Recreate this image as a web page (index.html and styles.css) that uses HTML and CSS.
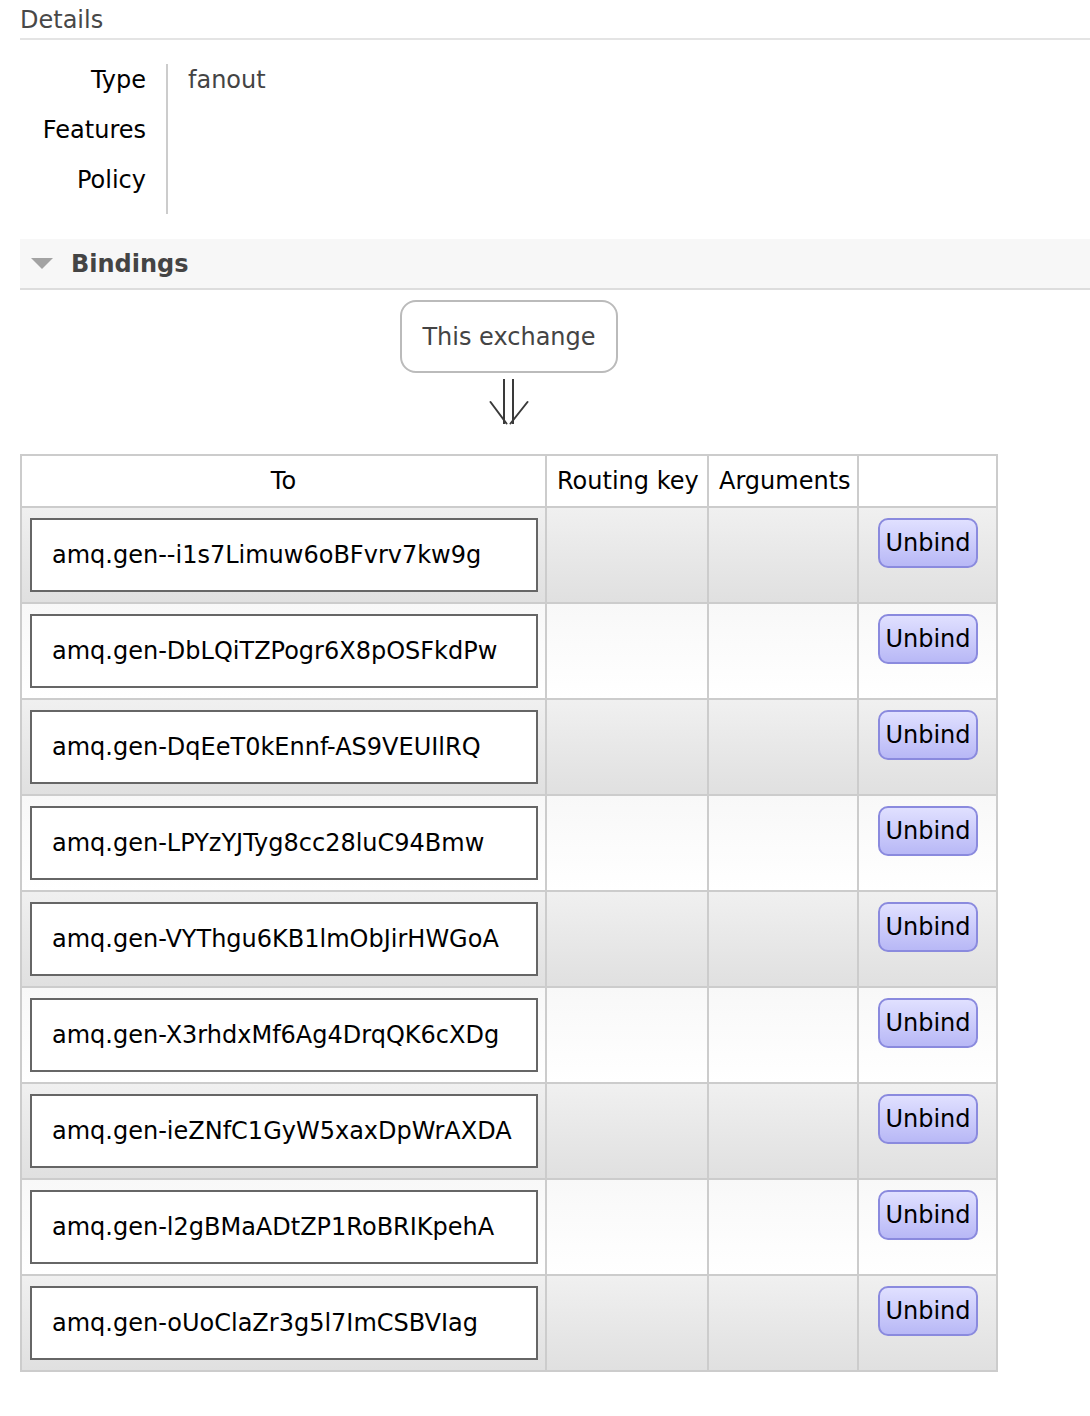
FILE: index.html
```html
<!DOCTYPE html>
<html lang="en">
<head>
<meta charset="utf-8">
<title>Exchange details</title>
<link rel="stylesheet" href="styles.css">
</head>
<body>
<div class="page">
  <section class="section">
    <h2 class="section-title">Details</h2>
    <table class="facts">
      <tr><th>Type</th><td>fanout</td></tr>
      <tr><th>Features</th><td></td></tr>
      <tr><th>Policy</th><td></td></tr>
    </table>
  </section>

  <section class="section">
    <h2 class="section-toggle"><span class="tri"></span>Bindings</h2>
    <div class="bindings-wrapper">
      <div class="exchange-box">This exchange</div>
      <svg class="arrow" width="40" height="50" viewBox="0 0 40 50" aria-hidden="true">
        <path d="M15 1 V46 M24 1 V46" stroke="#3a3a3a" stroke-width="2" fill="none"/>
        <path d="M1.5 24 L17.5 45.5 M38.5 24 L21.5 45.5" stroke="#3a3a3a" stroke-width="2" fill="none" stroke-linecap="round"/>
      </svg>
      <div class="bindings">
        <div class="brow head">
          <div class="cell">To</div>
          <div class="cell left">Routing key</div>
          <div class="cell left">Arguments</div>
          <div class="cell"></div>
        </div>
        <div class="brow alt1"><div class="cell"><span class="qname">amq.gen--i1s7Limuw6oBFvrv7kw9g</span></div><div class="cell"></div><div class="cell"></div><div class="cell act"><button class="btn">Unbind</button></div></div>
        <div class="brow alt2"><div class="cell"><span class="qname">amq.gen-DbLQiTZPogr6X8pOSFkdPw</span></div><div class="cell"></div><div class="cell"></div><div class="cell act"><button class="btn">Unbind</button></div></div>
        <div class="brow alt1"><div class="cell"><span class="qname">amq.gen-DqEeT0kEnnf-AS9VEUIlRQ</span></div><div class="cell"></div><div class="cell"></div><div class="cell act"><button class="btn">Unbind</button></div></div>
        <div class="brow alt2"><div class="cell"><span class="qname">amq.gen-LPYzYJTyg8cc28luC94Bmw</span></div><div class="cell"></div><div class="cell"></div><div class="cell act"><button class="btn">Unbind</button></div></div>
        <div class="brow alt1"><div class="cell"><span class="qname">amq.gen-VYThgu6KB1lmObJirHWGoA</span></div><div class="cell"></div><div class="cell"></div><div class="cell act"><button class="btn">Unbind</button></div></div>
        <div class="brow alt2"><div class="cell"><span class="qname">amq.gen-X3rhdxMf6Ag4DrqQK6cXDg</span></div><div class="cell"></div><div class="cell"></div><div class="cell act"><button class="btn">Unbind</button></div></div>
        <div class="brow alt1"><div class="cell"><span class="qname">amq.gen-ieZNfC1GyW5xaxDpWrAXDA</span></div><div class="cell"></div><div class="cell"></div><div class="cell act"><button class="btn">Unbind</button></div></div>
        <div class="brow alt2"><div class="cell"><span class="qname">amq.gen-l2gBMaADtZP1RoBRIKpehA</span></div><div class="cell"></div><div class="cell"></div><div class="cell act"><button class="btn">Unbind</button></div></div>
        <div class="brow alt1 last"><div class="cell"><span class="qname">amq.gen-oUoClaZr3g5l7ImCSBVIag</span></div><div class="cell"></div><div class="cell"></div><div class="cell act"><button class="btn">Unbind</button></div></div>
      </div>
    </div>
  </section>
</div>
</body>
</html>
```

FILE: styles.css
```css
html, body {
  margin: 0;
  padding: 0;
  background: #fff;
}
body {
  font-family: "DejaVu Sans", Verdana, sans-serif;
  font-size: 24px;
  line-height: 28px;
  color: #000;
}
.page {
  padding: 6px 0 40px 20px;
}
.section-title {
  margin: 0;
  font-size: 24px;
  font-weight: normal;
  line-height: 28px;
  color: #484848;
  padding-bottom: 4px;
  border-bottom: 2px solid #e4e4e4;
}
.facts {
  border-collapse: collapse;
  margin-top: 24px;
}
.facts th {
  width: 126px;
  padding: 2px 20px 20px 0;
  text-align: right;
  font-weight: normal;
  vertical-align: top;
  color: #000;
}
.facts td {
  border-left: 2px solid #ccc;
  padding: 2px 20px 20px 20px;
  vertical-align: top;
  color: #444;
}
.section-toggle {
  margin: 25px 0 0 0;
  height: 49px;
  background: #f7f7f7;
  border-bottom: 2px solid #ddd;
  display: flex;
  align-items: center;
  font-size: 24px;
  font-weight: bold;
  color: #444;
}
.tri {
  width: 0;
  height: 0;
  border-left: 11px solid transparent;
  border-right: 11px solid transparent;
  border-top: 11px solid #a3a3a3;
  margin: 0 18px 0 11px;
}
.bindings-wrapper {
  display: inline-flex;
  flex-direction: column;
  align-items: center;
  margin-top: 10px;
}
.exchange-box {
  border: 2px solid #bbb;
  border-radius: 16px;
  padding: 21px 20px 20px;
  color: #444;
}
.arrow {
  display: block;
  margin: 5px 0 26px;
}
.bindings {
  border: 2px solid #ccc;
  width: 974px;
}
.brow {
  display: grid;
  grid-template-columns: 525px 162px 150px 137px;
  border-bottom: 2px solid #ccc;
}
.brow.last {
  border-bottom: none;
}
.brow.head {
  background: #fff;
}
.brow.alt1 {
  background: linear-gradient(#f0f0f0, #e0e0e0);
}
.brow.alt2 {
  background: linear-gradient(#f8f8f8, #fff);
}
.cell {
  border-right: 2px solid #ccc;
}
.cell:last-child {
  border-right: none;
}
.head .cell {
  padding: 11px 10px;
  text-align: center;
  white-space: nowrap;
}
.head .cell.left {
  text-align: left;
}
.qname {
  display: block;
  margin: 10px 7px 10px 8px;
  border: 2px solid #666;
  background: #fff;
  padding: 21px 20px;
  line-height: 28px;
  color: #000;
  white-space: nowrap;
}
.act {
  display: flex;
  justify-content: center;
  align-items: flex-start;
  padding-top: 10px;
}
.btn {
  font-family: "DejaVu Sans", Verdana, sans-serif;
  font-size: 24px;
  line-height: 28px;
  width: 100px;
  height: 50px;
  padding: 0;
  margin: 0 0 0 1px;
  border: 2px solid #8a8ade;
  border-radius: 10px;
  background: linear-gradient(#e0e0ff, #b8b8f6);
  color: #000;
  cursor: pointer;
}
```
